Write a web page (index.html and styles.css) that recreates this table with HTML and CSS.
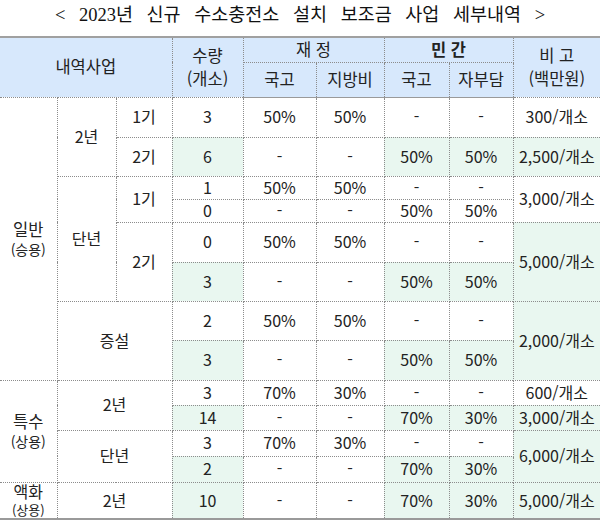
FILE: index.html
```html
<!DOCTYPE html>
<html lang="ko">
<head>
<meta charset="utf-8">
<link rel="stylesheet" href="styles.css">
</head>
<body>
<div class="title">&lt; 2023년 신규 수소충전소 설치 보조금 사업 세부내역 &gt;</div>
<table class="grid">
  <colgroup>
    <col class="c57"><col class="c59"><col class="c56"><col class="c71"><col class="c73"><col class="c68"><col class="c65"><col class="c64"><col class="c87">
  </colgroup>
  <thead>
    <tr class="ha">
      <th colspan="3" rowspan="2">내역사업</th>
      <th rowspan="2" class="two">수량<br>(개소)</th>
      <th colspan="2">재 정</th>
      <th colspan="2" class="bold">민 간</th>
      <th rowspan="2" class="two">비 고<br>(백만원)</th>
    </tr>
    <tr class="hb">
      <th>국고</th><th>지방비</th><th>국고</th><th>자부담</th>
    </tr>
  </thead>
  <tbody>
    <tr class="r40">
      <td rowspan="8" class="cat">일반<br><small>(승용)</small></td>
      <td rowspan="2">2년</td>
      <td>1기</td><td>3</td><td>50%</td><td>50%</td><td>-</td><td>-</td><td>300/개소</td>
    </tr>
    <tr class="r39">
      <td>2기</td><td class="g">6</td><td>-</td><td>-</td><td class="g">50%</td><td class="g">50%</td><td class="g">2,500/개소</td>
    </tr>
    <tr class="r23">
      <td rowspan="4">단년</td>
      <td rowspan="2">1기</td><td>1</td><td>50%</td><td>50%</td><td>-</td><td>-</td><td rowspan="2">3,000/개소</td>
    </tr>
    <tr class="r23">
      <td>0</td><td>-</td><td>-</td><td>50%</td><td>50%</td>
    </tr>
    <tr class="r40">
      <td rowspan="2">2기</td><td>0</td><td>50%</td><td>50%</td><td>-</td><td>-</td><td rowspan="2" class="g">5,000/개소</td>
    </tr>
    <tr class="r39">
      <td class="g">3</td><td>-</td><td>-</td><td class="g">50%</td><td class="g">50%</td>
    </tr>
    <tr class="r39">
      <td colspan="2" rowspan="2">증설</td><td>2</td><td>50%</td><td>50%</td><td>-</td><td>-</td><td rowspan="2" class="g">2,000/개소</td>
    </tr>
    <tr class="r40">
      <td class="g">3</td><td>-</td><td>-</td><td class="g">50%</td><td class="g">50%</td>
    </tr>
    <tr class="r25">
      <td rowspan="4" class="cat">특수<br><small>(상용)</small></td>
      <td colspan="2" rowspan="2">2년</td><td>3</td><td>70%</td><td>30%</td><td>-</td><td>-</td><td>600/개소</td>
    </tr>
    <tr class="r25">
      <td class="g">14</td><td>-</td><td>-</td><td class="g">70%</td><td class="g">30%</td><td class="g">3,000/개소</td>
    </tr>
    <tr class="r26">
      <td colspan="2" rowspan="2">단년</td><td>3</td><td>70%</td><td>30%</td><td>-</td><td>-</td><td rowspan="2" class="g">6,000/개소</td>
    </tr>
    <tr class="r26">
      <td class="g">2</td><td>-</td><td>-</td><td class="g">70%</td><td class="g">30%</td>
    </tr>
    <tr class="r35">
      <td class="cat tight">액화<br><small>(상용)</small></td>
      <td colspan="2">2년</td><td class="g">10</td><td>-</td><td>-</td><td class="g">70%</td><td class="g">30%</td><td class="g">5,000/개소</td>
    </tr>
  </tbody>
</table>
</body>
</html>
```

FILE: styles.css
```css
html, body {
  margin: 0;
  padding: 0;
  background: #ffffff;
}
body {
  width: 600px;
  height: 520px;
  overflow: hidden;
  font-family: "Noto Sans CJK KR", "Noto Sans", sans-serif;
  color: #222222;
}
.title {
  height: 36px;
  line-height: 30px;
  text-align: center;
  font-family: "Liberation Serif", "Noto Sans CJK KR", serif;
  font-size: 18.5px;
  word-spacing: 9px;
  color: #111111;
}
.grid {
  width: 600px;
  border-collapse: collapse;
  table-layout: fixed;
  font-size: 16px;
  line-height: 1.2;
  border-top: 2px solid #a0a0a0;
  border-bottom: 2px solid #9a9a9a;
}
.c57 { width: 57px; }
.c59 { width: 59px; }
.c56 { width: 56px; }
.c71 { width: 71px; }
.c73 { width: 73px; }
.c68 { width: 68px; }
.c65 { width: 65px; }
.c64 { width: 64px; }
.c87 { width: 87px; }
th, td {
  padding: 0;
  text-align: center;
  vertical-align: middle;
  border: 1px dotted #8c8c8c;
  white-space: nowrap;
}
th {
  background: #d7e8fc;
  font-weight: normal;
  font-size: 16.5px;
}
th.two { line-height: 1.4; }
th.bold { font-weight: bold; }
thead tr:last-child th { border-bottom: 1px solid #9a9a9a; }
tr > :first-child { border-left: none; }
tr > :last-child { border-right: none; }
thead tr.hb th:last-child { border-right: 1px dotted #8c8c8c; }
.ha { height: 25px; }
.hb { height: 35px; }
.r23 { height: 23px; }
.r25 { height: 25px; }
.r26 { height: 26px; }
.r35 { height: 34px; }
.r39 { height: 39px; }
.r40 { height: 40px; }
td.g { background: #e9f7f0; }
.cat { line-height: 1.15; font-size: 16.5px; }
.cat small { font-size: 14px; }
.cat.tight { line-height: 1.1; font-size: 16px; }
.cat.tight small { font-size: 13px; }
```
